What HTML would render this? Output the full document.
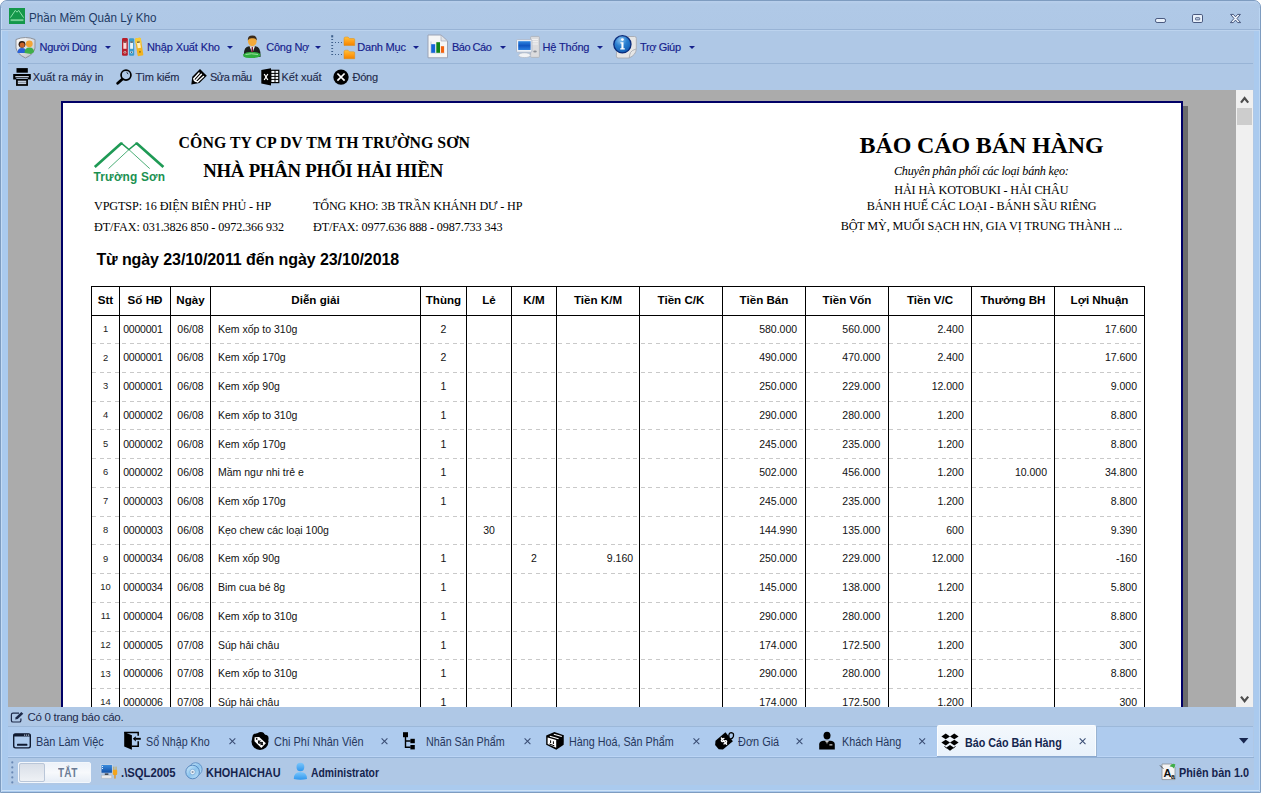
<!DOCTYPE html>
<html><head><meta charset="utf-8"><title>Phần Mềm Quản Lý Kho</title>
<style>
html,body{margin:0;padding:0}
body{width:1261px;height:793px;overflow:hidden;position:relative;background:#fff;font-family:"Liberation Sans",sans-serif}
.a{position:absolute}
.t{position:absolute;white-space:pre;line-height:1}
.s{font-family:"Liberation Serif",serif}
.dash{height:1px;background:repeating-linear-gradient(90deg,#c9c9c9 0 4px,transparent 4px 7.52px)}
</style></head>
<body>
<div class="a" style="left:0;top:0;width:1261px;height:793px;box-sizing:border-box;border:1px solid #7e9cc0;border-radius:7px 7px 0 0;background:#afc8e6;overflow:hidden"></div>
<div class="a" style="left:1px;top:1px;width:1259px;height:28px;border-radius:6px 6px 0 0;background:linear-gradient(#b8cfec,#b0c9e7 12%,#afc8e6)"></div>
<div class="a" style="left:1px;top:30px;width:7px;height:762px;background:#aacaee;"></div>
<div class="a" style="left:1254px;top:30px;width:6px;height:762px;background:#aacaee;"></div>
<div class="a" style="left:1px;top:785px;width:1259px;height:7px;background:#aacaee;"></div>
<div class="a" style="left:1px;top:790px;width:1259px;height:1px;background:#cde2f7;"></div>
<div class="a" style="left:1px;top:8px;width:1px;height:784px;background:#c4dbf4;"></div>
<div class="a" style="left:1259px;top:8px;width:1px;height:784px;background:#bcd6f2;"></div>
<svg class="a" style="left:1150px;top:10px" width="100" height="16" viewBox="0 0 100 16"><rect x="5.5" y="8.5" width="10" height="4" rx="1.6" fill="#e8f0fa" stroke="#3a4a72" stroke-width="0.9"/><rect x="42.5" y="4.5" width="10" height="8" rx="1.3" fill="#e8f0fa" stroke="#3a4a72" stroke-width="0.9"/><rect x="45.5" y="7.7" width="4.2" height="2.2" rx="0.6" fill="#c9d8ec" stroke="#3a4a72" stroke-width="0.8"/><path d="M80.6 4.4 L83.4 4.4 L85.5 6.8 L87.6 4.4 L90.4 4.4 L87 8.5 L90.6 12.6 L87.7 12.6 L85.5 10.1 L83.3 12.6 L80.4 12.6 L84 8.5 Z" fill="#eef4fb" stroke="#3a4a72" stroke-width="0.9" stroke-linejoin="round"/></svg>
<div class="a" style="left:1px;top:29px;width:1259px;height:1px;background:#98b3d5;"></div>
<div class="a" style="left:2px;top:30px;width:1257px;height:1px;background:#bcd3ee;"></div>
<div class="a" style="left:8px;top:63px;width:1245px;height:1px;background:#98b4d6;"></div>
<div class="a" style="left:104.5px;top:46px;width:0;height:0;border-left:3px solid transparent;border-right:3px solid transparent;border-top:3px solid #15208c"></div>
<div class="a" style="left:226.5px;top:46px;width:0;height:0;border-left:3px solid transparent;border-right:3px solid transparent;border-top:3px solid #15208c"></div>
<div class="a" style="left:314.5px;top:46px;width:0;height:0;border-left:3px solid transparent;border-right:3px solid transparent;border-top:3px solid #15208c"></div>
<div class="a" style="left:412.5px;top:46px;width:0;height:0;border-left:3px solid transparent;border-right:3px solid transparent;border-top:3px solid #15208c"></div>
<div class="a" style="left:499.5px;top:46px;width:0;height:0;border-left:3px solid transparent;border-right:3px solid transparent;border-top:3px solid #15208c"></div>
<div class="a" style="left:596.5px;top:46px;width:0;height:0;border-left:3px solid transparent;border-right:3px solid transparent;border-top:3px solid #15208c"></div>
<div class="a" style="left:688.5px;top:46px;width:0;height:0;border-left:3px solid transparent;border-right:3px solid transparent;border-top:3px solid #15208c"></div>
<svg class="a" style="left:9px;top:8px" width="16" height="16" viewBox="0 0 16 16"><rect width="16" height="16" fill="#14974a"/><path d="M1.4 9.6 L6.3 2.4 L8 4.2 L9.7 2.4 L14.6 9.6" fill="none" stroke="#9be8b4" stroke-width="0.9"/><rect x="1.6" y="11.2" width="12.8" height="1.9" fill="#74cf95"/></svg>
<svg class="a" style="left:14px;top:36px" width="23" height="23" viewBox="0 0 23 23"><defs><linearGradient id="sh" x1="0" y1="0" x2="1" y2="1"><stop offset="0" stop-color="#ffffff"/><stop offset="1" stop-color="#b9bdc4"/></linearGradient></defs><path d="M2 3.5 Q11.5 -0.5 21 3.5 L21 12 Q20 18 11.5 22 Q3 18 2 12 Z" fill="url(#sh)" stroke="#8d929b" stroke-width="1"/><path d="M3.5 17 Q3.5 12 8 12 Q12.5 12 12.5 17 Z" fill="#2a62d8"/><path d="M10.5 17 Q10.5 11.5 15.5 11.5 Q20 11.5 20 16 L17 18 Z" fill="#3fae49"/><circle cx="8" cy="8.3" r="3.4" fill="#2a1a12"/><circle cx="8.2" cy="9" r="2.5" fill="#c8622a"/><circle cx="15.3" cy="7.8" r="3.4" fill="#f2a436"/></svg>
<svg class="a" style="left:121px;top:37px" width="24" height="20" viewBox="0 0 24 20"><rect x="1" y="1" width="5.8" height="17.8" rx="1.2" fill="#b71f2c"/><rect x="2.3" y="4.6" width="3.2" height="7.2" fill="#fbd9d9"/><rect x="2.5" y="4.6" width="2.8" height="1" fill="#400"/><circle cx="3.9" cy="15.2" r="1.3" fill="#f3c9c9"/><circle cx="3.9" cy="15.2" r="0.6" fill="#400"/><rect x="8" y="1.3" width="5.2" height="17.5" rx="1.2" fill="#3b9bcb"/><rect x="9.1" y="4.6" width="3" height="7.2" fill="#e6f3fa"/><rect x="9.3" y="4.6" width="2.6" height="1" fill="#123"/><circle cx="10.6" cy="15.2" r="1.3" fill="#d6ecf7"/><circle cx="10.6" cy="15.2" r="0.6" fill="#123"/><g transform="rotate(-9 18 10)"><rect x="15.3" y="1" width="5.8" height="18" rx="1.2" fill="#f2b31f"/><rect x="15.3" y="1" width="5.8" height="6" rx="1.2" fill="#f6cb3a"/><rect x="16.6" y="4.6" width="3.2" height="6.5" fill="#fdf0c4"/><rect x="16.8" y="4.6" width="2.8" height="1" fill="#430"/><circle cx="18.2" cy="15" r="0.7" fill="#430"/></g></svg>
<svg class="a" style="left:242px;top:34px" width="20" height="25" viewBox="0 0 20 25"><path d="M2 23 Q1 13 7 12.3 L13.5 12.3 Q19 13 18.5 23 Z" fill="#1c201e"/><path d="M7.5 12.3 L10.3 19 L13 12.3 Z" fill="#f4f4f4"/><path d="M9.7 13 L10.9 13 L11.2 18 L10.3 19.4 L9.4 18 Z" fill="#7a1530"/><ellipse cx="10.3" cy="7.2" rx="4.3" ry="5" fill="#f1a93a"/><path d="M5.8 6.4 Q5.6 1.6 10.3 1.6 Q15 1.6 14.8 6.4 Q13.6 3.8 10.3 4.2 Q7 3.8 5.8 6.4 Z" fill="#3a2a1a"/><path d="M1 20.5 Q5 17.5 10 18.2 Q15 17.5 18.5 20 L18 22.5 Q14 24.5 9.5 24 Q4 24.5 1.5 22.5 Z" fill="#2fae3f"/><path d="M3.5 20.5 Q9 19 16 20.5" stroke="#9be29f" stroke-width="1" fill="none"/></svg>
<svg class="a" style="left:330px;top:34px" width="26" height="26" viewBox="0 0 26 26"><defs><linearGradient id="fo" x1="0" y1="0" x2="0" y2="1"><stop offset="0" stop-color="#ffc23c"/><stop offset="0.6" stop-color="#ff9a12"/><stop offset="1" stop-color="#f08300"/></linearGradient></defs><rect x="1.3" y="5" width="1.8" height="1" fill="#3e5f8a"/><rect x="1.3" y="8" width="1.8" height="1" fill="#3e5f8a"/><rect x="1.3" y="11" width="1.8" height="1" fill="#3e5f8a"/><rect x="1.3" y="14" width="1.8" height="1" fill="#3e5f8a"/><rect x="1.3" y="17" width="1.8" height="1" fill="#3e5f8a"/><rect x="1.3" y="20" width="1.8" height="1" fill="#3e5f8a"/><rect x="1.2" y="1.2" width="2" height="2.2" fill="#3e5f8a"/><rect x="5" y="8" width="1" height="1" fill="#3e5f8a"/><rect x="8" y="8" width="1" height="1" fill="#3e5f8a"/><rect x="11" y="8" width="1" height="1" fill="#3e5f8a"/><rect x="5" y="20" width="1" height="1" fill="#3e5f8a"/><rect x="8" y="20" width="1" height="1" fill="#3e5f8a"/><rect x="11" y="20" width="1" height="1" fill="#3e5f8a"/><path d="M14 4.5 Q14 3 15.5 3 L18 3 L19.5 4.5 L23.6 4.5 Q24.7 4.5 24.7 5.6 L24.7 11.5 L14 11.5 Z" fill="url(#fo)" stroke="#e08a10" stroke-width="0.5"/><path d="M14 17.7 Q14 16.2 15.5 16.2 L18 16.2 L19.5 17.7 L23.6 17.7 Q24.7 17.7 24.7 18.8 L24.7 24.7 L14 24.7 Z" fill="url(#fo)" stroke="#e08a10" stroke-width="0.5"/></svg>
<svg class="a" style="left:427px;top:34px" width="22" height="25" viewBox="0 0 22 25"><path d="M1 1 L14 1 L20.5 7 L20.5 23.8 L1 23.8 Z" fill="#f6f6f6" stroke="#9aa3b5" stroke-width="1"/><path d="M14 1 L14 7 L20.5 7 Z" fill="#e2e4e8" stroke="#9aa3b5" stroke-width="0.6"/><rect x="3.6" y="7.5" width="0.8" height="11.5" fill="#b9c0cc"/><rect x="3.6" y="18.6" width="14" height="0.8" fill="#c7ccd6"/><rect x="4.2" y="10.2" width="4" height="8.6" fill="#1565d8"/><rect x="9.3" y="8.2" width="3.7" height="10.6" fill="#108416"/><rect x="13.9" y="12.2" width="3.2" height="6.6" fill="#f2620f"/></svg>
<svg class="a" style="left:515px;top:35px" width="26" height="24" viewBox="0 0 26 24"><defs><linearGradient id="scr" x1="0" y1="0" x2="0" y2="1"><stop offset="0" stop-color="#2f86e0"/><stop offset="0.5" stop-color="#0f55c0"/><stop offset="1" stop-color="#2a7fe0"/></linearGradient></defs><rect x="15.6" y="1.4" width="8.8" height="21" rx="1" fill="#dcdcde" stroke="#a9acb3" stroke-width="0.7"/><rect x="17" y="4" width="6" height="0.8" fill="#f7f7f7"/><rect x="17" y="6.3" width="6" height="0.8" fill="#f7f7f7"/><rect x="17" y="8.6" width="6" height="0.8" fill="#f7f7f7"/><ellipse cx="20" cy="16.6" rx="1.8" ry="1" fill="#8c9098"/><ellipse cx="9.5" cy="20.2" rx="6" ry="2.4" fill="#f1f3f6" stroke="#a9b0bc" stroke-width="0.6"/><rect x="1.5" y="4.6" width="15.4" height="12.6" rx="1" fill="#eef2f7" stroke="#a9b3c4" stroke-width="0.8"/><rect x="3.2" y="6.2" width="12.4" height="8.8" fill="url(#scr)"/></svg>
<svg class="a" style="left:612px;top:34px" width="26" height="26" viewBox="0 0 26 26"><defs><radialGradient id="inf" cx="0.4" cy="0.25" r="0.8"><stop offset="0" stop-color="#8cc4f0"/><stop offset="0.45" stop-color="#2a7fd0"/><stop offset="1" stop-color="#0f58b0"/></radialGradient></defs><path d="M6 2.5 L22.5 2.5 Q24.3 2.5 24.3 4.3 L24.3 15 Q24 21 17 24 L6 24 Q4.3 24 4.3 22 Z" fill="#e6e6e6" stroke="#a2a5ab" stroke-width="0.8"/><path d="M24 15 Q20 16 18.5 18.5 Q17.5 21 17.2 23.8" fill="none" stroke="#a2a5ab" stroke-width="0.8"/><circle cx="10.4" cy="10.3" r="8.6" fill="url(#inf)" stroke="#0b2b7a" stroke-width="1.3"/><circle cx="10.4" cy="5.6" r="1.4" fill="#fff"/><path d="M8.4 8.3 L11.5 8.3 L11.5 14.2 L12.8 14.2 L12.8 15.5 L8.2 15.5 L8.2 14.2 L9.4 14.2 L9.4 9.6 L8.4 9.6 Z" fill="#fff"/></svg>
<svg class="a" style="left:13px;top:68px" width="18" height="18" viewBox="0 0 18 18"><rect x="3.5" y="0.1" width="11.3" height="4.6" fill="#000"/><path d="M0.2 5.9 L17.8 5.9 L17.8 11.6 L14.8 11.6 L14.8 9.9 L3.3 9.9 L3.3 11.6 L0.2 11.6 Z" fill="#000"/><rect x="2.3" y="8.1" width="13.5" height="1.2" fill="#d6e2f2"/><rect x="3.9" y="11.7" width="10.2" height="5.3" fill="#8f9aaa" stroke="#000" stroke-width="1.7"/><rect x="5" y="13" width="8" height="0.9" fill="#c9d6e8"/><rect x="5" y="15" width="8" height="0.9" fill="#c9d6e8"/></svg>
<svg class="a" style="left:116px;top:69px" width="17" height="17" viewBox="0 0 17 17"><circle cx="10" cy="6.1" r="4.95" fill="none" stroke="#000" stroke-width="1.7"/><path d="M6.2 10.2 L1.7 14.3" stroke="#000" stroke-width="2.8" stroke-linecap="round"/><path d="M10.6 3.4 L12.2 4.8" stroke="#000" stroke-width="1"/></svg>
<svg class="a" style="left:190px;top:68px" width="18" height="18" viewBox="0 0 18 18"><path d="M1.3 16.4 L2.3 8.7 L10 1.1 L16.8 7.7 L9.4 15 Z" fill="#000"/><g stroke="#fff" stroke-width="1.45" stroke-linecap="round" fill="none"><path d="M4.1 10.5 L9.05 4.95"/><path d="M5.6 12.5 L11.4 6.2"/><path d="M7.8 13.7 L13.5 8.5"/><path d="M4 10.6 Q3.6 13.4 7.6 13.9"/></g></svg>
<svg class="a" style="left:261px;top:68px" width="19" height="18" viewBox="0 0 19 18"><rect x="9.8" y="2.3" width="8" height="12.3" fill="#f4f8fc" stroke="#000" stroke-width="1.2"/><path d="M9.8 5.4 H17.8 M9.8 8.4 H17.8 M9.8 11.4 H17.8 M14 2.3 V14.6" stroke="#000" stroke-width="1"/><path d="M0.3 2.1 L10 0.3 L10 17.4 L0.3 15.6 Z" fill="#000"/><path d="M3.2 6 L6.8 12 M6.8 6 L3.2 12" stroke="#fff" stroke-width="1.3"/></svg>
<svg class="a" style="left:333px;top:69px" width="16" height="17" viewBox="0 0 16 17"><circle cx="8" cy="8.1" r="7.7" fill="#000"/><path d="M4.4 4.5 L11.6 11.7 M11.6 4.5 L4.4 11.7" stroke="#fff" stroke-width="1.7"/></svg>
<div class="a" style="left:8px;top:90px;width:1228px;height:617px;background:#ababab;"></div>
<div class="a" style="left:1236px;top:90px;width:17px;height:617px;background:#f0f0f0;"></div>
<div class="a" style="left:1237px;top:108px;width:15px;height:17px;background:#cdcdcd;"></div>
<div class="a" style="left:1183px;top:106px;width:5px;height:601px;background:#6b6b6b;"></div>
<div class="a" style="left:61px;top:101px;width:1122px;height:606px;background:#000066;"></div>
<div class="a" style="left:63px;top:103px;width:1118px;height:604px;background:#ffffff;"></div>
<svg class="a" style="left:93px;top:141px" width="74" height="30" viewBox="0 0 74 30"><g fill="none" stroke="#1f9a55"><path d="M1.8 25.9 L28 2.6 L29.4 2.6" stroke-width="2.7"/><path d="M70.4 25.9 L44 2.6 L42.6 2.6" stroke-width="2.7"/><path d="M28.6 2.4 L35.9 8.6 L43.4 2.4" stroke-width="1.5"/><path d="M35.9 8.6 L56.7 27.6" stroke-width="0.8"/><path d="M35.9 8.6 L15.5 27.6" stroke-width="0.8"/></g></svg>
<div class="a dash" style="left:92px;top:343px;width:1050px;"></div>
<div class="a dash" style="left:92px;top:372px;width:1050px;"></div>
<div class="a dash" style="left:92px;top:401px;width:1050px;"></div>
<div class="a dash" style="left:92px;top:429px;width:1050px;"></div>
<div class="a dash" style="left:92px;top:458px;width:1050px;"></div>
<div class="a dash" style="left:92px;top:487px;width:1050px;"></div>
<div class="a dash" style="left:92px;top:516px;width:1050px;"></div>
<div class="a dash" style="left:92px;top:544px;width:1050px;"></div>
<div class="a dash" style="left:92px;top:573px;width:1050px;"></div>
<div class="a dash" style="left:92px;top:602px;width:1050px;"></div>
<div class="a dash" style="left:92px;top:631px;width:1050px;"></div>
<div class="a dash" style="left:92px;top:659px;width:1050px;"></div>
<div class="a dash" style="left:92px;top:688px;width:1050px;"></div>
<div class="a" style="left:91px;top:286px;width:1px;height:421px;background:#000;"></div>
<div class="a" style="left:119px;top:286px;width:1px;height:421px;background:#000;"></div>
<div class="a" style="left:170px;top:286px;width:1px;height:421px;background:#000;"></div>
<div class="a" style="left:210px;top:286px;width:1px;height:421px;background:#000;"></div>
<div class="a" style="left:420px;top:286px;width:1px;height:421px;background:#000;"></div>
<div class="a" style="left:466px;top:286px;width:1px;height:421px;background:#000;"></div>
<div class="a" style="left:511px;top:286px;width:1px;height:421px;background:#000;"></div>
<div class="a" style="left:556px;top:286px;width:1px;height:421px;background:#000;"></div>
<div class="a" style="left:639px;top:286px;width:1px;height:421px;background:#000;"></div>
<div class="a" style="left:722px;top:286px;width:1px;height:421px;background:#000;"></div>
<div class="a" style="left:805px;top:286px;width:1px;height:421px;background:#000;"></div>
<div class="a" style="left:888px;top:286px;width:1px;height:421px;background:#000;"></div>
<div class="a" style="left:971px;top:286px;width:1px;height:421px;background:#000;"></div>
<div class="a" style="left:1054px;top:286px;width:1px;height:421px;background:#000;"></div>
<div class="a" style="left:1144px;top:286px;width:1px;height:421px;background:#000;"></div>
<div class="a" style="left:91px;top:286px;width:1054px;height:1px;background:#000;"></div>
<div class="a" style="left:91px;top:315px;width:1054px;height:1px;background:#000;"></div>
<div class="a" style="left:8px;top:707px;width:1246px;height:78px;background:#afc8e6;"></div>
<div class="a" style="left:8px;top:727px;width:1245px;height:29px;background:#aecbee;"></div>
<div class="a" style="left:8px;top:726px;width:1245px;height:1px;background:#9cb8d9;"></div>
<div class="a" style="left:8px;top:756px;width:1245px;height:1px;background:#bbd5f6;"></div>
<div class="a" style="left:8px;top:757px;width:1246px;height:1px;background:#93b1d5;"></div>
<div class="a" style="left:937px;top:756px;width:160px;height:1px;background:#8aa8cf;"></div>
<div class="a" style="left:1096px;top:727px;width:1px;height:29px;background:#9ab4d2;"></div>
<div class="a" style="left:937px;top:725px;width:159px;height:31px;box-sizing:border-box;border:1px solid #fbfdff;border-bottom:none;border-radius:2px 2px 0 0;background:linear-gradient(#f3f8fd,#e9f2fb)"></div>
<svg class="a" style="left:1239px;top:95px" width="12" height="10" viewBox="0 0 12 10"><path d="M2 7.6 L5.6 3 L9.2 7.6" fill="none" stroke="#4d4d4d" stroke-width="2.2" stroke-linejoin="miter"/></svg>
<svg class="a" style="left:1239px;top:694px" width="12" height="10" viewBox="0 0 12 10"><path d="M2 2.6 L5.6 7.2 L9.2 2.6" fill="none" stroke="#4d4d4d" stroke-width="2.2" stroke-linejoin="miter"/></svg>
<svg class="a" style="left:10px;top:711px" width="15" height="12" viewBox="0 0 15 12"><path d="M9 2.2 L3 2.2 Q1.4 2.2 1.4 3.8 L1.4 9.4 Q1.4 11 3 11 L9.3 11 Q10.9 11 10.9 9.4 L10.9 7.6" fill="none" stroke="#1e2a4a" stroke-width="1.2"/><path d="M5.2 8.6 L5.8 6.2 L11.3 0.9 L13.3 2.8 L7.7 8.1 Z" fill="#1e2a4a"/></svg>
<svg class="a" style="left:12px;top:732px" width="20" height="18" viewBox="0 0 20 18"><rect x="1.7" y="1.9" width="16.6" height="14" rx="1.8" fill="none" stroke="#101a30" stroke-width="1.4"/><rect x="1.7" y="1.9" width="16.6" height="2.6" fill="#101a30"/><rect x="12" y="2.6" width="1.2" height="1" fill="#cfe0f3"/><rect x="14" y="2.6" width="1.2" height="1" fill="#cfe0f3"/><rect x="16" y="2.6" width="1.2" height="1" fill="#cfe0f3"/><rect x="5" y="11.8" width="10.4" height="2" rx="0.6" fill="#101a30"/></svg>
<svg class="a" style="left:123px;top:731px" width="19" height="20" viewBox="0 0 19 20"><path d="M1.2 1.1 L8.9 4.3 L8.9 18.8 L1.2 15.4 Z" fill="#000"/><path d="M1.2 1.4 L15.2 1.4 L15.2 4.7 M15.2 10.3 L15.2 15.3 L8.9 15.3" fill="none" stroke="#000" stroke-width="1.5"/><path d="M9.8 7.8 L12.8 5.2 L12.8 10.4 Z" fill="#000"/><path d="M12.6 7.8 L17.8 7.8" stroke="#000" stroke-width="1.9"/></svg>
<svg class="a" style="left:250px;top:731px" width="20" height="20" viewBox="0 0 20 20"><circle cx="10" cy="10.6" r="8.5" fill="#000"/><circle cx="6.2" cy="6.4" r="3.8" fill="#000"/><circle cx="10.8" cy="4.9" r="4" fill="#000"/><circle cx="15" cy="7.4" r="3.6" fill="#000"/><path d="M4.6 6.2 L9.2 6.05 L15.9 12.2 L11.3 17.1 L4.5 10.3 Z" fill="#fff"/><circle cx="6.7" cy="7.95" r="0.85" fill="#000"/><g transform="translate(10.5 11.8) rotate(-48) scale(0.78)" fill="none" stroke="#000" stroke-width="1.28" stroke-linecap="round"><path d="M1.7 -2 Q0 -3.3 -1.6 -2.1 Q-2.6 -0.7 0 0 Q2.6 0.7 1.6 2.1 Q0 3.3 -1.7 2"/><path d="M0 -3.9 L0 3.9"/></g></svg>
<svg class="a" style="left:402px;top:731px" width="14" height="19" viewBox="0 0 14 19"><rect x="1" y="1.2" width="5" height="5" fill="#000"/><rect x="8.4" y="7.8" width="4.4" height="4.4" fill="#000"/><rect x="8.4" y="14" width="4.4" height="4.4" fill="#000"/><path d="M3.5 6 L3.5 16.2 L8.6 16.2 M3.5 10 L8.6 10" fill="none" stroke="#000" stroke-width="1.4"/></svg>
<svg class="a" style="left:545px;top:731px" width="20" height="20" viewBox="0 0 20 20"><path d="M1.2 4.6 L9.4 1.1 L18.8 4.3 L18.7 13.8 L11.3 18.8 L1.2 13.7 Z" fill="#000"/><path d="M2.6 6.5 L11.2 9 L11.2 16.8 L2.6 13 Z" fill="#fff"/><path d="M4.8 5.2 L13.6 7.7 M8.8 3.2 L16.8 5.5" stroke="#fff" stroke-width="1.1" fill="none"/><path d="M5.6 9.3 L5.6 12 M8.4 10.3 L8.4 13 M4.4 13 L9.4 14.8" stroke="#000" stroke-width="1" fill="none"/></svg>
<svg class="a" style="left:714px;top:731px" width="21" height="20" viewBox="0 0 21 20"><g transform="rotate(-40 10 10.5)"><path d="M1 7.4 L4 4.4 L17 4.4 L17 16 L4 16 L1 13 Z" fill="#000"/><g transform="translate(10.2 10.2) rotate(0) scale(1.05)" fill="none" stroke="#fff" stroke-width="1.24" stroke-linecap="round"><path d="M1.7 -2 Q0 -3.3 -1.6 -2.1 Q-2.6 -0.7 0 0 Q2.6 0.7 1.6 2.1 Q0 3.3 -1.7 2"/><path d="M0 -3.9 L0 3.9"/></g></g><path d="M15 6.2 Q14.2 2 17.2 1.6 Q20.2 1.8 19.4 5.4 Q18.6 7.4 16.4 8" fill="none" stroke="#000" stroke-width="1.3"/></svg>
<svg class="a" style="left:818px;top:731px" width="18" height="19" viewBox="0 0 18 19"><ellipse cx="9" cy="4.6" rx="3.5" ry="3.9" fill="#000"/><path d="M1.2 18.6 L1.2 13.4 Q1.2 10.4 5 9.8 L13 9.8 Q16.8 10.4 16.8 13.4 L16.8 18.6 Z" fill="#000"/><path d="M7.2 9.8 L9 13.6 L10.8 9.8 Z" fill="#fff"/><path d="M8.6 10.6 L9.4 10.6 L9.7 13.4 L9 14.4 L8.3 13.4 Z" fill="#000"/><rect x="11.4" y="13.4" width="3" height="1" fill="#fff"/></svg>
<svg class="a" style="left:940px;top:732px" width="20" height="20" viewBox="0 0 20 20"><path d="M5.7 1.6000000000000005 L10.0 4.4 L5.7 7.2 L1.4000000000000004 4.4 Z" fill="#000"/><path d="M14.3 1.6000000000000005 L18.6 4.4 L14.3 7.2 L10.0 4.4 Z" fill="#000"/><path d="M5.7 7.8 L10.0 10.6 L5.7 13.399999999999999 L1.4000000000000004 10.6 Z" fill="#000"/><path d="M14.3 7.8 L18.6 10.6 L14.3 13.399999999999999 L10.0 10.6 Z" fill="#000"/><path d="M10 13 L14 15.8 L10 18.8 L6 15.8 Z" fill="#000"/><path d="M4.4 14.4 L6.6 16 M15.6 14.4 L13.4 16" stroke="#000" stroke-width="0.9"/></svg>
<svg class="a" style="left:1238px;top:737px" width="12" height="8" viewBox="0 0 12 8"><path d="M1 1 L10.4 1 L5.7 6.4 Z" fill="#17264f"/></svg>
<svg class="a" style="left:10px;top:760px" width="5" height="26" viewBox="0 0 5 26"><circle cx="2.3" cy="2.4" r="1.1" fill="#6a89b5"/><circle cx="2.3" cy="7.4" r="1.1" fill="#6a89b5"/><circle cx="2.3" cy="12.4" r="1.1" fill="#6a89b5"/><circle cx="2.3" cy="17.4" r="1.1" fill="#6a89b5"/><circle cx="2.3" cy="22.4" r="1.1" fill="#6a89b5"/></svg>
<div class="a" style="left:18px;top:762px;width:73px;height:21px;box-sizing:border-box;border:1px solid #f3f7fc;border-radius:2px;background:linear-gradient(#edf2f9,#f7f9fc 50%,#e6edf6)"></div>
<div class="a" style="left:19px;top:763px;width:26px;height:19px;box-sizing:border-box;border:1px solid #b9c6d8;border-radius:2px;background:linear-gradient(#d9dfe8,#e6eaf0 60%,#eef1f5)"></div>
<svg class="a" style="left:100px;top:763px" width="19" height="17" viewBox="0 0 19 17"><defs><linearGradient id="sq" x1="0" y1="0" x2="0" y2="1"><stop offset="0" stop-color="#3d8fe0"/><stop offset="1" stop-color="#0f4ea6"/></linearGradient></defs><rect x="1" y="1.4" width="11.4" height="8.8" fill="url(#sq)" stroke="#c9d6e6" stroke-width="0.9"/><rect x="2" y="3" width="1" height="1" fill="#dfeeff"/><rect x="2" y="5" width="1" height="1" fill="#dfeeff"/><rect x="4.8" y="10.4" width="3.6" height="1.6" fill="#3a3f48"/><rect x="1.6" y="12.2" width="10.2" height="3" fill="#ececec" stroke="#b4b9c1" stroke-width="0.6"/><rect x="13.4" y="3.6" width="0.9" height="3.6" fill="#c9a640"/><rect x="15.6" y="3.6" width="0.9" height="3.6" fill="#c9a640"/><rect x="12.8" y="6.8" width="4.4" height="5.2" rx="1" fill="#f3a51e"/><rect x="14.3" y="11.8" width="1.3" height="3.8" fill="#e0921a"/></svg>
<svg class="a" style="left:185px;top:762px" width="18" height="18" viewBox="0 0 18 18"><defs><linearGradient id="cdg" x1="0" y1="0" x2="1" y2="1"><stop offset="0" stop-color="#d4ecfb"/><stop offset="0.5" stop-color="#8cc4ee"/><stop offset="1" stop-color="#c4e2f8"/></linearGradient></defs><circle cx="10.6" cy="7.2" r="6.5" fill="url(#cdg)" stroke="#5f8fc4" stroke-width="0.9"/><circle cx="7.6" cy="10" r="6.8" fill="url(#cdg)" stroke="#4f82bb" stroke-width="0.9"/><circle cx="7.6" cy="10" r="2.7" fill="#e8f3fb" stroke="#6f9fd0" stroke-width="0.7"/><circle cx="7.6" cy="10" r="1.1" fill="#8a98ac"/></svg>
<svg class="a" style="left:293px;top:762px" width="15" height="18" viewBox="0 0 15 18"><defs><linearGradient id="usr" x1="0" y1="0" x2="0" y2="1"><stop offset="0" stop-color="#7cc6fb"/><stop offset="1" stop-color="#2f97ee"/></linearGradient></defs><ellipse cx="7.4" cy="5" rx="3.9" ry="4.2" fill="url(#usr)"/><path d="M0.8 17 Q0.6 10.4 7.4 10 Q14.2 10.4 14 17 Q7.4 18.6 0.8 17 Z" fill="url(#usr)"/></svg>
<svg class="a" style="left:1159px;top:762px" width="18" height="19" viewBox="0 0 18 19"><path d="M3 2 L13 2 L16 5 L16 17.6 L3 17.6 Z" fill="#f4f4f4" stroke="#8b8f96" stroke-width="0.8"/><text x="8.6" y="15" font-family="Liberation Sans" font-size="11" font-weight="bold" text-anchor="middle" fill="#111">A</text><text x="14" y="16.6" font-family="Liberation Sans" font-size="7" font-weight="bold" text-anchor="middle" fill="#111">a</text><path d="M10.6 4.6 Q12.6 0.6 16.4 2.4 L15 6.4 Q13.4 4.4 10.6 4.6 Z" fill="#3fae49"/><path d="M1 3.4 L4.4 6.8" stroke="#444" stroke-width="0.9"/></svg>
<svg class="a" style="left:227px;top:736px" width="10" height="10" viewBox="0 0 10 10"><path d="M2.50 2.4 L8.30 8.2 M8.30 2.4 L2.50 8.2" stroke="#3a4d74" stroke-width="1.05" fill="none"/></svg>
<svg class="a" style="left:380px;top:736px" width="10" height="10" viewBox="0 0 10 10"><path d="M1.60 2.4 L7.40 8.2 M7.40 2.4 L1.60 8.2" stroke="#3a4d74" stroke-width="1.05" fill="none"/></svg>
<svg class="a" style="left:522px;top:736px" width="10" height="10" viewBox="0 0 10 10"><path d="M2.60 2.4 L8.40 8.2 M8.40 2.4 L2.60 8.2" stroke="#3a4d74" stroke-width="1.05" fill="none"/></svg>
<svg class="a" style="left:691px;top:736px" width="10" height="10" viewBox="0 0 10 10"><path d="M2.50 2.4 L8.30 8.2 M8.30 2.4 L2.50 8.2" stroke="#3a4d74" stroke-width="1.05" fill="none"/></svg>
<svg class="a" style="left:794px;top:736px" width="10" height="10" viewBox="0 0 10 10"><path d="M2.60 2.4 L8.40 8.2 M8.40 2.4 L2.60 8.2" stroke="#3a4d74" stroke-width="1.05" fill="none"/></svg>
<svg class="a" style="left:917px;top:736px" width="10" height="10" viewBox="0 0 10 10"><path d="M2.30 2.4 L8.10 8.2 M8.10 2.4 L2.30 8.2" stroke="#3a4d74" stroke-width="1.05" fill="none"/></svg>
<svg class="a" style="left:1078px;top:736px" width="10" height="10" viewBox="0 0 10 10"><path d="M1.70 2.4 L7.50 8.2 M7.50 2.4 L1.70 8.2" stroke="#3a4d74" stroke-width="1.05" fill="none"/></svg>
<span class="t" style="left:29.30px;top:12.00px;font-size:12.4px;color:#1e3a64;transform:scaleX(0.9397);transform-origin:0 0;">Phần Mềm Quản Lý Kho</span>
<span class="t" style="left:39.60px;top:42.00px;font-size:11px;color:#15208c;letter-spacing:-0.338px;-webkit-text-stroke:0.15px #15208c;">Người Dùng</span>
<span class="t" style="left:147.00px;top:42.00px;font-size:11px;color:#15208c;letter-spacing:-0.135px;-webkit-text-stroke:0.15px #15208c;">Nhập Xuất Kho</span>
<span class="t" style="left:266.30px;top:42.00px;font-size:11px;color:#15208c;letter-spacing:-0.253px;-webkit-text-stroke:0.15px #15208c;">Công Nợ</span>
<span class="t" style="left:357.30px;top:42.00px;font-size:11px;color:#15208c;letter-spacing:-0.206px;-webkit-text-stroke:0.15px #15208c;">Danh Mục</span>
<span class="t" style="left:452.00px;top:42.00px;font-size:11px;color:#15208c;letter-spacing:-0.502px;-webkit-text-stroke:0.15px #15208c;">Báo Cáo</span>
<span class="t" style="left:542.40px;top:42.00px;font-size:11px;color:#15208c;letter-spacing:-0.144px;-webkit-text-stroke:0.15px #15208c;">Hệ Thống</span>
<span class="t" style="left:640.00px;top:42.00px;font-size:11px;color:#15208c;letter-spacing:-0.355px;-webkit-text-stroke:0.15px #15208c;">Trợ Giúp</span>
<span class="t" style="left:32.70px;top:72.00px;font-size:11px;color:#1e2a4a;letter-spacing:-0.009px;-webkit-text-stroke:0.12px #1e2a4a;">Xuất ra máy in</span>
<span class="t" style="left:135.40px;top:72.00px;font-size:11px;color:#1e2a4a;letter-spacing:-0.176px;-webkit-text-stroke:0.12px #1e2a4a;">Tìm kiếm</span>
<span class="t" style="left:210.00px;top:72.00px;font-size:11px;color:#1e2a4a;letter-spacing:-0.514px;-webkit-text-stroke:0.12px #1e2a4a;">Sửa mẫu</span>
<span class="t" style="left:281.50px;top:72.00px;font-size:11px;color:#1e2a4a;letter-spacing:-0.037px;-webkit-text-stroke:0.12px #1e2a4a;">Kết xuất</span>
<span class="t" style="left:352.50px;top:72.00px;font-size:11px;color:#1e2a4a;letter-spacing:-0.266px;-webkit-text-stroke:0.12px #1e2a4a;">Đóng</span>
<span class="t s" style="left:178.60px;top:135.00px;font-size:15.8px;color:#000;font-weight:bold;letter-spacing:0.072px;">CÔNG TY CP DV TM TH TRƯỜNG SƠN</span>
<span class="t s" style="left:203.20px;top:162.00px;font-size:18.8px;color:#000;font-weight:bold;letter-spacing:-0.244px;">NHÀ PHÂN PHỐI HẢI HIỀN</span>
<span class="t s" style="left:94.00px;top:200.00px;font-size:12.2px;color:#000;letter-spacing:-0.125px;">VPGTSP: 16 ĐIỆN BIÊN PHỦ - HP</span>
<span class="t s" style="left:313.00px;top:200.00px;font-size:12.2px;color:#000;letter-spacing:-0.152px;">TỔNG KHO: 3B TRẦN KHÁNH DƯ - HP</span>
<span class="t s" style="left:94.00px;top:221.00px;font-size:12.2px;color:#000;letter-spacing:-0.108px;">ĐT/FAX: 031.3826 850 - 0972.366 932</span>
<span class="t s" style="left:313.00px;top:221.00px;font-size:12.2px;color:#000;letter-spacing:-0.125px;">ĐT/FAX: 0977.636 888 - 0987.733 343</span>
<span class="t" style="left:96.40px;top:252.00px;font-size:16px;color:#000;font-weight:bold;letter-spacing:-0.086px;">Từ ngày 23/10/2011 đến ngày 23/10/2018</span>
<span class="t" style="left:93.50px;top:172.00px;font-size:11.9px;color:#1b9151;font-weight:bold;letter-spacing:0.180px;">Trường Sơn</span>
<span class="t s" style="left:859.55px;top:133.00px;font-size:24px;color:#000;font-weight:bold;letter-spacing:-0.128px;">BÁO CÁO BÁN HÀNG</span>
<span class="t s" style="left:893.95px;top:165.00px;font-size:12.2px;color:#000;font-style:italic;letter-spacing:-0.232px;">Chuyên phân phối các loại bánh kẹo:</span>
<span class="t s" style="left:894.35px;top:184.00px;font-size:12.2px;color:#000;letter-spacing:-0.163px;">HẢI HÀ KOTOBUKI - HẢI CHÂU</span>
<span class="t s" style="left:866.70px;top:200.00px;font-size:12.2px;color:#000;letter-spacing:-0.161px;">BÁNH HUẾ CÁC LOẠI - BÁNH SẦU RIÊNG</span>
<span class="t s" style="left:840.65px;top:220.00px;font-size:12.2px;color:#000;letter-spacing:-0.120px;">BỘT MỲ, MUỐI SẠCH HN, GIA VỊ TRUNG THÀNH ...</span>
<span class="t" style="left:97.77px;top:294.00px;font-size:11.6px;color:#000;font-weight:bold;">Stt</span>
<span class="t" style="left:127.61px;top:294.00px;font-size:11.6px;color:#000;font-weight:bold;">Số HĐ</span>
<span class="t" style="left:176.32px;top:294.00px;font-size:11.6px;color:#000;font-weight:bold;">Ngày</span>
<span class="t" style="left:291.34px;top:294.00px;font-size:11.6px;color:#000;font-weight:bold;">Diễn giải</span>
<span class="t" style="left:425.79px;top:294.00px;font-size:11.6px;color:#000;font-weight:bold;">Thùng</span>
<span class="t" style="left:482.23px;top:294.00px;font-size:11.6px;color:#000;font-weight:bold;">Lẻ</span>
<span class="t" style="left:523.37px;top:294.00px;font-size:11.6px;color:#000;font-weight:bold;">K/M</span>
<span class="t" style="left:573.95px;top:294.00px;font-size:11.6px;color:#000;font-weight:bold;">Tiền K/M</span>
<span class="t" style="left:657.59px;top:294.00px;font-size:11.6px;color:#000;font-weight:bold;">Tiền C/K</span>
<span class="t" style="left:739.62px;top:294.00px;font-size:11.6px;color:#000;font-weight:bold;">Tiền Bán</span>
<span class="t" style="left:822.62px;top:294.00px;font-size:11.6px;color:#000;font-weight:bold;">Tiền Vốn</span>
<span class="t" style="left:906.91px;top:294.00px;font-size:11.6px;color:#000;font-weight:bold;">Tiền V/C</span>
<span class="t" style="left:980.53px;top:294.00px;font-size:11.6px;color:#000;font-weight:bold;">Thưởng BH</span>
<span class="t" style="left:1070.58px;top:294.00px;font-size:11.6px;color:#000;font-weight:bold;">Lợi Nhuận</span>
<span class="t" style="left:102.89px;top:324.00px;font-size:9.4px;color:#222;">1</span>
<span class="t" style="left:123.20px;top:324.00px;font-size:10.5px;color:#111;letter-spacing:-0.215px;">0000001</span>
<span class="t" style="left:177.36px;top:324.00px;font-size:10.5px;color:#111;">06/08</span>
<span class="t" style="left:218.00px;top:324.00px;font-size:10.5px;color:#111;">Kem xốp to 310g</span>
<span class="t" style="left:440.58px;top:324.00px;font-size:10.5px;color:#111;">2</span>
<span class="t" style="left:759.13px;top:324.00px;font-size:10.5px;color:#111;">580.000</span>
<span class="t" style="left:842.33px;top:324.00px;font-size:10.5px;color:#111;">560.000</span>
<span class="t" style="left:937.52px;top:324.00px;font-size:10.5px;color:#111;">2.400</span>
<span class="t" style="left:1104.88px;top:324.00px;font-size:10.5px;color:#111;">17.600</span>
<span class="t" style="left:102.89px;top:353.00px;font-size:9.4px;color:#222;">2</span>
<span class="t" style="left:123.20px;top:352.00px;font-size:10.5px;color:#111;letter-spacing:-0.215px;">0000001</span>
<span class="t" style="left:177.36px;top:352.00px;font-size:10.5px;color:#111;">06/08</span>
<span class="t" style="left:218.00px;top:352.00px;font-size:10.5px;color:#111;">Kem xốp 170g</span>
<span class="t" style="left:440.58px;top:352.00px;font-size:10.5px;color:#111;">2</span>
<span class="t" style="left:759.13px;top:352.00px;font-size:10.5px;color:#111;">490.000</span>
<span class="t" style="left:842.33px;top:352.00px;font-size:10.5px;color:#111;">470.000</span>
<span class="t" style="left:937.52px;top:352.00px;font-size:10.5px;color:#111;">2.400</span>
<span class="t" style="left:1104.88px;top:352.00px;font-size:10.5px;color:#111;">17.600</span>
<span class="t" style="left:102.89px;top:381.00px;font-size:9.4px;color:#222;">3</span>
<span class="t" style="left:123.20px;top:381.00px;font-size:10.5px;color:#111;letter-spacing:-0.215px;">0000001</span>
<span class="t" style="left:177.36px;top:381.00px;font-size:10.5px;color:#111;">06/08</span>
<span class="t" style="left:218.00px;top:381.00px;font-size:10.5px;color:#111;">Kem xốp 90g</span>
<span class="t" style="left:440.58px;top:381.00px;font-size:10.5px;color:#111;">1</span>
<span class="t" style="left:759.13px;top:381.00px;font-size:10.5px;color:#111;">250.000</span>
<span class="t" style="left:842.33px;top:381.00px;font-size:10.5px;color:#111;">229.000</span>
<span class="t" style="left:931.67px;top:381.00px;font-size:10.5px;color:#111;">12.000</span>
<span class="t" style="left:1110.72px;top:381.00px;font-size:10.5px;color:#111;">9.000</span>
<span class="t" style="left:102.89px;top:410.00px;font-size:9.4px;color:#222;">4</span>
<span class="t" style="left:123.20px;top:410.00px;font-size:10.5px;color:#111;letter-spacing:-0.215px;">0000002</span>
<span class="t" style="left:177.36px;top:410.00px;font-size:10.5px;color:#111;">06/08</span>
<span class="t" style="left:218.00px;top:410.00px;font-size:10.5px;color:#111;">Kem xốp to 310g</span>
<span class="t" style="left:440.58px;top:410.00px;font-size:10.5px;color:#111;">1</span>
<span class="t" style="left:759.13px;top:410.00px;font-size:10.5px;color:#111;">290.000</span>
<span class="t" style="left:842.33px;top:410.00px;font-size:10.5px;color:#111;">280.000</span>
<span class="t" style="left:937.52px;top:410.00px;font-size:10.5px;color:#111;">1.200</span>
<span class="t" style="left:1110.72px;top:410.00px;font-size:10.5px;color:#111;">8.800</span>
<span class="t" style="left:102.89px;top:439.00px;font-size:9.4px;color:#222;">5</span>
<span class="t" style="left:123.20px;top:439.00px;font-size:10.5px;color:#111;letter-spacing:-0.215px;">0000002</span>
<span class="t" style="left:177.36px;top:439.00px;font-size:10.5px;color:#111;">06/08</span>
<span class="t" style="left:218.00px;top:439.00px;font-size:10.5px;color:#111;">Kem xốp 170g</span>
<span class="t" style="left:440.58px;top:439.00px;font-size:10.5px;color:#111;">1</span>
<span class="t" style="left:759.13px;top:439.00px;font-size:10.5px;color:#111;">245.000</span>
<span class="t" style="left:842.33px;top:439.00px;font-size:10.5px;color:#111;">235.000</span>
<span class="t" style="left:937.52px;top:439.00px;font-size:10.5px;color:#111;">1.200</span>
<span class="t" style="left:1110.72px;top:439.00px;font-size:10.5px;color:#111;">8.800</span>
<span class="t" style="left:102.89px;top:467.00px;font-size:9.4px;color:#222;">6</span>
<span class="t" style="left:123.20px;top:467.00px;font-size:10.5px;color:#111;letter-spacing:-0.215px;">0000002</span>
<span class="t" style="left:177.36px;top:467.00px;font-size:10.5px;color:#111;">06/08</span>
<span class="t" style="left:218.00px;top:467.00px;font-size:10.5px;color:#111;">Mầm ngư nhi trẻ e</span>
<span class="t" style="left:440.58px;top:467.00px;font-size:10.5px;color:#111;">1</span>
<span class="t" style="left:759.13px;top:467.00px;font-size:10.5px;color:#111;">502.000</span>
<span class="t" style="left:842.33px;top:467.00px;font-size:10.5px;color:#111;">456.000</span>
<span class="t" style="left:937.52px;top:467.00px;font-size:10.5px;color:#111;">1.200</span>
<span class="t" style="left:1014.88px;top:467.00px;font-size:10.5px;color:#111;">10.000</span>
<span class="t" style="left:1104.88px;top:467.00px;font-size:10.5px;color:#111;">34.800</span>
<span class="t" style="left:102.89px;top:496.00px;font-size:9.4px;color:#222;">7</span>
<span class="t" style="left:123.20px;top:496.00px;font-size:10.5px;color:#111;letter-spacing:-0.215px;">0000003</span>
<span class="t" style="left:177.36px;top:496.00px;font-size:10.5px;color:#111;">06/08</span>
<span class="t" style="left:218.00px;top:496.00px;font-size:10.5px;color:#111;">Kem xốp 170g</span>
<span class="t" style="left:440.58px;top:496.00px;font-size:10.5px;color:#111;">1</span>
<span class="t" style="left:759.13px;top:496.00px;font-size:10.5px;color:#111;">245.000</span>
<span class="t" style="left:842.33px;top:496.00px;font-size:10.5px;color:#111;">235.000</span>
<span class="t" style="left:937.52px;top:496.00px;font-size:10.5px;color:#111;">1.200</span>
<span class="t" style="left:1110.72px;top:496.00px;font-size:10.5px;color:#111;">8.800</span>
<span class="t" style="left:102.89px;top:525.00px;font-size:9.4px;color:#222;">8</span>
<span class="t" style="left:123.20px;top:525.00px;font-size:10.5px;color:#111;letter-spacing:-0.215px;">0000003</span>
<span class="t" style="left:177.36px;top:525.00px;font-size:10.5px;color:#111;">06/08</span>
<span class="t" style="left:218.00px;top:525.00px;font-size:10.5px;color:#111;">Kẹo chew các loại 100g</span>
<span class="t" style="left:483.16px;top:525.00px;font-size:10.5px;color:#111;">30</span>
<span class="t" style="left:759.13px;top:525.00px;font-size:10.5px;color:#111;">144.990</span>
<span class="t" style="left:842.33px;top:525.00px;font-size:10.5px;color:#111;">135.000</span>
<span class="t" style="left:946.27px;top:525.00px;font-size:10.5px;color:#111;">600</span>
<span class="t" style="left:1110.72px;top:525.00px;font-size:10.5px;color:#111;">9.390</span>
<span class="t" style="left:102.89px;top:554.00px;font-size:9.4px;color:#222;">9</span>
<span class="t" style="left:123.20px;top:553.00px;font-size:10.5px;color:#111;letter-spacing:-0.215px;">0000034</span>
<span class="t" style="left:177.36px;top:553.00px;font-size:10.5px;color:#111;">06/08</span>
<span class="t" style="left:218.00px;top:553.00px;font-size:10.5px;color:#111;">Kem xốp 90g</span>
<span class="t" style="left:440.58px;top:553.00px;font-size:10.5px;color:#111;">1</span>
<span class="t" style="left:531.08px;top:553.00px;font-size:10.5px;color:#111;">2</span>
<span class="t" style="left:606.82px;top:553.00px;font-size:10.5px;color:#111;">9.160</span>
<span class="t" style="left:759.13px;top:553.00px;font-size:10.5px;color:#111;">250.000</span>
<span class="t" style="left:842.33px;top:553.00px;font-size:10.5px;color:#111;">229.000</span>
<span class="t" style="left:931.67px;top:553.00px;font-size:10.5px;color:#111;">12.000</span>
<span class="t" style="left:1115.98px;top:553.00px;font-size:10.5px;color:#111;">-160</span>
<span class="t" style="left:100.28px;top:582.00px;font-size:9.4px;color:#222;">10</span>
<span class="t" style="left:123.20px;top:582.00px;font-size:10.5px;color:#111;letter-spacing:-0.215px;">0000034</span>
<span class="t" style="left:177.36px;top:582.00px;font-size:10.5px;color:#111;">06/08</span>
<span class="t" style="left:218.00px;top:582.00px;font-size:10.5px;color:#111;">Bim cua bé 8g</span>
<span class="t" style="left:440.58px;top:582.00px;font-size:10.5px;color:#111;">1</span>
<span class="t" style="left:759.13px;top:582.00px;font-size:10.5px;color:#111;">145.000</span>
<span class="t" style="left:842.33px;top:582.00px;font-size:10.5px;color:#111;">138.000</span>
<span class="t" style="left:937.52px;top:582.00px;font-size:10.5px;color:#111;">1.200</span>
<span class="t" style="left:1110.72px;top:582.00px;font-size:10.5px;color:#111;">5.800</span>
<span class="t" style="left:100.63px;top:611.00px;font-size:9.4px;color:#222;">11</span>
<span class="t" style="left:123.20px;top:611.00px;font-size:10.5px;color:#111;letter-spacing:-0.215px;">0000004</span>
<span class="t" style="left:177.36px;top:611.00px;font-size:10.5px;color:#111;">06/08</span>
<span class="t" style="left:218.00px;top:611.00px;font-size:10.5px;color:#111;">Kem xốp to 310g</span>
<span class="t" style="left:440.58px;top:611.00px;font-size:10.5px;color:#111;">1</span>
<span class="t" style="left:759.13px;top:611.00px;font-size:10.5px;color:#111;">290.000</span>
<span class="t" style="left:842.33px;top:611.00px;font-size:10.5px;color:#111;">280.000</span>
<span class="t" style="left:937.52px;top:611.00px;font-size:10.5px;color:#111;">1.200</span>
<span class="t" style="left:1110.72px;top:611.00px;font-size:10.5px;color:#111;">8.800</span>
<span class="t" style="left:100.28px;top:640.00px;font-size:9.4px;color:#222;">12</span>
<span class="t" style="left:123.20px;top:640.00px;font-size:10.5px;color:#111;letter-spacing:-0.215px;">0000005</span>
<span class="t" style="left:177.36px;top:640.00px;font-size:10.5px;color:#111;">07/08</span>
<span class="t" style="left:218.00px;top:640.00px;font-size:10.5px;color:#111;">Súp hải châu</span>
<span class="t" style="left:440.58px;top:640.00px;font-size:10.5px;color:#111;">1</span>
<span class="t" style="left:759.13px;top:640.00px;font-size:10.5px;color:#111;">174.000</span>
<span class="t" style="left:842.33px;top:640.00px;font-size:10.5px;color:#111;">172.500</span>
<span class="t" style="left:937.52px;top:640.00px;font-size:10.5px;color:#111;">1.200</span>
<span class="t" style="left:1119.47px;top:640.00px;font-size:10.5px;color:#111;">300</span>
<span class="t" style="left:100.28px;top:669.00px;font-size:9.4px;color:#222;">13</span>
<span class="t" style="left:123.20px;top:668.00px;font-size:10.5px;color:#111;letter-spacing:-0.215px;">0000006</span>
<span class="t" style="left:177.36px;top:668.00px;font-size:10.5px;color:#111;">07/08</span>
<span class="t" style="left:218.00px;top:668.00px;font-size:10.5px;color:#111;">Kem xốp to 310g</span>
<span class="t" style="left:440.58px;top:668.00px;font-size:10.5px;color:#111;">1</span>
<span class="t" style="left:759.13px;top:668.00px;font-size:10.5px;color:#111;">290.000</span>
<span class="t" style="left:842.33px;top:668.00px;font-size:10.5px;color:#111;">280.000</span>
<span class="t" style="left:937.52px;top:668.00px;font-size:10.5px;color:#111;">1.200</span>
<span class="t" style="left:1110.72px;top:668.00px;font-size:10.5px;color:#111;">8.800</span>
<span class="t" style="left:100.28px;top:697.00px;font-size:9.4px;color:#222;">14</span>
<span class="t" style="left:123.20px;top:697.00px;font-size:10.5px;color:#111;letter-spacing:-0.215px;">0000006</span>
<span class="t" style="left:177.36px;top:697.00px;font-size:10.5px;color:#111;">07/08</span>
<span class="t" style="left:218.00px;top:697.00px;font-size:10.5px;color:#111;">Súp hải châu</span>
<span class="t" style="left:440.58px;top:697.00px;font-size:10.5px;color:#111;">1</span>
<span class="t" style="left:759.13px;top:697.00px;font-size:10.5px;color:#111;">174.000</span>
<span class="t" style="left:842.33px;top:697.00px;font-size:10.5px;color:#111;">172.500</span>
<span class="t" style="left:937.52px;top:697.00px;font-size:10.5px;color:#111;">1.200</span>
<span class="t" style="left:1119.47px;top:697.00px;font-size:10.5px;color:#111;">300</span>
<span class="t" style="left:27.40px;top:712.00px;font-size:11.5px;color:#1e2a4a;letter-spacing:-0.262px;">Có 0 trang báo cáo.</span>
<span class="t" style="left:36.20px;top:736.00px;font-size:12px;color:#26375c;transform:scaleX(0.9101);transform-origin:0 0;">Bàn Làm Việc</span>
<span class="t" style="left:146.30px;top:736.00px;font-size:12px;color:#26375c;transform:scaleX(0.8909);transform-origin:0 0;">Sổ Nhập Kho</span>
<span class="t" style="left:274.10px;top:736.00px;font-size:12px;color:#26375c;transform:scaleX(0.9095);transform-origin:0 0;">Chi Phí Nhân Viên</span>
<span class="t" style="left:426.20px;top:736.00px;font-size:12px;color:#26375c;transform:scaleX(0.8925);transform-origin:0 0;">Nhãn Sản Phẩm</span>
<span class="t" style="left:569.30px;top:736.00px;font-size:12px;color:#26375c;transform:scaleX(0.8968);transform-origin:0 0;">Hàng Hoá, Sản Phẩm</span>
<span class="t" style="left:737.60px;top:736.00px;font-size:12px;color:#26375c;transform:scaleX(0.9111);transform-origin:0 0;">Đơn Giá</span>
<span class="t" style="left:841.50px;top:736.00px;font-size:12px;color:#26375c;transform:scaleX(0.8963);transform-origin:0 0;">Khách Hàng</span>
<span class="t" style="left:964.70px;top:737.00px;font-size:12px;color:#14264e;font-weight:bold;transform:scaleX(0.8952);transform-origin:0 0;">Báo Cáo Bán Hàng</span>
<span class="t" style="left:57.80px;top:767.00px;font-size:12px;color:#6a7b95;font-weight:bold;transform:scaleX(0.8359);transform-origin:0 0;">TẮT</span>
<span class="t" style="left:120.80px;top:767.00px;font-size:12.3px;color:#16244e;font-weight:bold;transform:scaleX(0.9181);transform-origin:0 0;">.\SQL2005</span>
<span class="t" style="left:205.60px;top:767.00px;font-size:12.3px;color:#16244e;font-weight:bold;transform:scaleX(0.8878);transform-origin:0 0;">KHOHAICHAU</span>
<span class="t" style="left:311.20px;top:767.00px;font-size:12.3px;color:#16244e;font-weight:bold;transform:scaleX(0.8434);transform-origin:0 0;">Administrator</span>
<span class="t" style="left:1178.80px;top:767.00px;font-size:12.3px;color:#16244e;font-weight:bold;transform:scaleX(0.8829);transform-origin:0 0;">Phiên bản 1.0</span>
</body></html>
